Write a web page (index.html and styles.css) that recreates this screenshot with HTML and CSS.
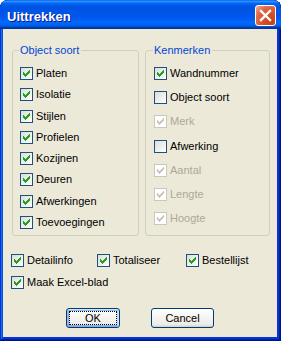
FILE: index.html
```html
<!DOCTYPE html>
<html>
<head>
<meta charset="utf-8">
<link rel="stylesheet" href="styles.css">
</head>
<body>
<div class="window">
  <div class="titlebar">
    <span class="title">Uittrekken</span>
    <span class="close"><svg width="19" height="19" viewBox="0 0 19 19"><path d="M5 5 L14 14 M14 5 L5 14" stroke="#fff" stroke-width="2.4" stroke-linecap="square"/></svg></span>
  </div>
  <div class="client">
    <div class="groups">
      <fieldset class="group group-left">
        <legend>Object soort</legend>
        <div class="list list-left">
          <label class="row"><span class="cb"><svg class="chk" width="13" height="13" viewBox="0 0 13 13"><path d="M3 5h1v3h-1zM4 6h1v3h-1zM5 7h1v3h-1zM6 6h1v3h-1zM7 5h1v3h-1zM8 4h1v3h-1zM9 3h1v3h-1z"/></svg></span>Platen</label>
          <label class="row"><span class="cb"><svg class="chk" width="13" height="13" viewBox="0 0 13 13"><path d="M3 5h1v3h-1zM4 6h1v3h-1zM5 7h1v3h-1zM6 6h1v3h-1zM7 5h1v3h-1zM8 4h1v3h-1zM9 3h1v3h-1z"/></svg></span>Isolatie</label>
          <label class="row"><span class="cb"><svg class="chk" width="13" height="13" viewBox="0 0 13 13"><path d="M3 5h1v3h-1zM4 6h1v3h-1zM5 7h1v3h-1zM6 6h1v3h-1zM7 5h1v3h-1zM8 4h1v3h-1zM9 3h1v3h-1z"/></svg></span>Stijlen</label>
          <label class="row"><span class="cb"><svg class="chk" width="13" height="13" viewBox="0 0 13 13"><path d="M3 5h1v3h-1zM4 6h1v3h-1zM5 7h1v3h-1zM6 6h1v3h-1zM7 5h1v3h-1zM8 4h1v3h-1zM9 3h1v3h-1z"/></svg></span>Profielen</label>
          <label class="row"><span class="cb"><svg class="chk" width="13" height="13" viewBox="0 0 13 13"><path d="M3 5h1v3h-1zM4 6h1v3h-1zM5 7h1v3h-1zM6 6h1v3h-1zM7 5h1v3h-1zM8 4h1v3h-1zM9 3h1v3h-1z"/></svg></span>Kozijnen</label>
          <label class="row"><span class="cb"><svg class="chk" width="13" height="13" viewBox="0 0 13 13"><path d="M3 5h1v3h-1zM4 6h1v3h-1zM5 7h1v3h-1zM6 6h1v3h-1zM7 5h1v3h-1zM8 4h1v3h-1zM9 3h1v3h-1z"/></svg></span>Deuren</label>
          <label class="row"><span class="cb"><svg class="chk" width="13" height="13" viewBox="0 0 13 13"><path d="M3 5h1v3h-1zM4 6h1v3h-1zM5 7h1v3h-1zM6 6h1v3h-1zM7 5h1v3h-1zM8 4h1v3h-1zM9 3h1v3h-1z"/></svg></span>Afwerkingen</label>
          <label class="row"><span class="cb"><svg class="chk" width="13" height="13" viewBox="0 0 13 13"><path d="M3 5h1v3h-1zM4 6h1v3h-1zM5 7h1v3h-1zM6 6h1v3h-1zM7 5h1v3h-1zM8 4h1v3h-1zM9 3h1v3h-1z"/></svg></span>Toevoegingen</label>
        </div>
      </fieldset>
      <fieldset class="group group-right">
        <legend>Kenmerken</legend>
        <div class="list list-right">
          <label class="row"><span class="cb"><svg class="chk" width="13" height="13" viewBox="0 0 13 13"><path d="M3 5h1v3h-1zM4 6h1v3h-1zM5 7h1v3h-1zM6 6h1v3h-1zM7 5h1v3h-1zM8 4h1v3h-1zM9 3h1v3h-1z"/></svg></span>Wandnummer</label>
          <label class="row"><span class="cb"></span>Object soort</label>
          <label class="row disabled"><span class="cb"><svg class="chk" width="13" height="13" viewBox="0 0 13 13"><path d="M3 5h1v3h-1zM4 6h1v3h-1zM5 7h1v3h-1zM6 6h1v3h-1zM7 5h1v3h-1zM8 4h1v3h-1zM9 3h1v3h-1z"/></svg></span>Merk</label>
          <label class="row"><span class="cb"></span>Afwerking</label>
          <label class="row disabled"><span class="cb"><svg class="chk" width="13" height="13" viewBox="0 0 13 13"><path d="M3 5h1v3h-1zM4 6h1v3h-1zM5 7h1v3h-1zM6 6h1v3h-1zM7 5h1v3h-1zM8 4h1v3h-1zM9 3h1v3h-1z"/></svg></span>Aantal</label>
          <label class="row disabled"><span class="cb"><svg class="chk" width="13" height="13" viewBox="0 0 13 13"><path d="M3 5h1v3h-1zM4 6h1v3h-1zM5 7h1v3h-1zM6 6h1v3h-1zM7 5h1v3h-1zM8 4h1v3h-1zM9 3h1v3h-1z"/></svg></span>Lengte</label>
          <label class="row disabled"><span class="cb"><svg class="chk" width="13" height="13" viewBox="0 0 13 13"><path d="M3 5h1v3h-1zM4 6h1v3h-1zM5 7h1v3h-1zM6 6h1v3h-1zM7 5h1v3h-1zM8 4h1v3h-1zM9 3h1v3h-1z"/></svg></span>Hoogte</label>
        </div>
      </fieldset>
    </div>
    <div class="options">
      <label class="row"><span class="cb"><svg class="chk" width="13" height="13" viewBox="0 0 13 13"><path d="M3 5h1v3h-1zM4 6h1v3h-1zM5 7h1v3h-1zM6 6h1v3h-1zM7 5h1v3h-1zM8 4h1v3h-1zM9 3h1v3h-1z"/></svg></span>Detailinfo</label>
      <label class="row"><span class="cb"><svg class="chk" width="13" height="13" viewBox="0 0 13 13"><path d="M3 5h1v3h-1zM4 6h1v3h-1zM5 7h1v3h-1zM6 6h1v3h-1zM7 5h1v3h-1zM8 4h1v3h-1zM9 3h1v3h-1z"/></svg></span>Totaliseer</label>
      <label class="row"><span class="cb"><svg class="chk" width="13" height="13" viewBox="0 0 13 13"><path d="M3 5h1v3h-1zM4 6h1v3h-1zM5 7h1v3h-1zM6 6h1v3h-1zM7 5h1v3h-1zM8 4h1v3h-1zM9 3h1v3h-1z"/></svg></span>Bestellijst</label>
      <label class="row wide"><span class="cb"><svg class="chk" width="13" height="13" viewBox="0 0 13 13"><path d="M3 5h1v3h-1zM4 6h1v3h-1zM5 7h1v3h-1zM6 6h1v3h-1zM7 5h1v3h-1zM8 4h1v3h-1zM9 3h1v3h-1z"/></svg></span>Maak Excel-blad</label>
    </div>
    <div class="buttons">
      <button class="btn btn-ok">OK</button>
      <button class="btn btn-cancel">Cancel</button>
    </div>
  </div>
</div>
</body>
</html>
```

FILE: styles.css
```css
html, body {
  margin: 0;
  padding: 0;
  background: #fff;
}

.window {
  width: 281px;
  height: 341px;
  box-sizing: border-box;
  display: flex;
  flex-direction: column;
  border-radius: 8px 8px 0 0;
  background: #0831d9;
  box-shadow: inset -1px -1px #00138c, inset 1px 1px #0831d9, inset -2px -2px #001ea0, inset 2px 2px #166aee, inset -3px -3px #003bda, inset 3px 3px #0855dd;
  overflow: hidden;
  font-family: "Liberation Sans", Arial, sans-serif;
  font-size: 11px;
}

.titlebar {
  height: 29px;
  flex: none;
  box-sizing: border-box;
  display: flex;
  align-items: flex-start;
  justify-content: space-between;
  padding: 5px 5px 0 7px;
  border-radius: 8px 8px 0 0;
  background: linear-gradient(180deg, #0997ff 0%, #0053ee 8%, #0050ee 40%, #0066ff 88%, #0066ff 93%, #005bff 95%, #003dd7 96%, #003dd7 100%);
  background: linear-gradient(180deg, #0058ee 0%, #3593ff 4%, #288eff 6%, #127dff 8%, #036ffc 10%, #0262ee 14%, #0057e5 20%, #0054e3 24%, #0055eb 56%, #005bf5 66%, #026afe 76%, #0062ef 86%, #0052d6 92%, #0040ab 94%, #003092 100%);
}

.title {
  margin-top: 4px;
  font-family: "Liberation Sans", Arial, sans-serif;
  font-weight: bold;
  font-size: 13px;
  line-height: 15px;
  color: #fff;
  text-shadow: 1px 1px #0f1089;
  letter-spacing: 0;
}

.close {
  width: 21px;
  height: 21px;
  box-sizing: border-box;
  border: 1px solid #fff;
  border-radius: 3px;
  background: radial-gradient(circle at 90% 90%, #cc4600 0%, #dc6527 55%, #cd7546 70%, #ffccb2 90%, #fff 100%);
  background: radial-gradient(circle at 85% 85%, #c8401c 0%, #d9522e 45%, #e06a48 70%, #f0a48a 95%, #fbd4c4 110%);
  display: flex;
}

.client {
  flex: 1;
  margin: 0 4px 4px 3px;
  background: #ece9d8;
  padding: 15px 7px 0 8px;
}

.groups {
  display: flex;
  gap: 6px;
  margin-left: 1px;
}

.group {
  margin: 0;
  border: 1px solid #d0d0bf;
  border-radius: 3px;
  min-width: 0;
  box-sizing: border-box;
}

.group-left {
  width: 127px;
  padding: 10px 0 6px 7px;
}

.group-right {
  width: 125px;
  padding: 10px 0 6px 8px;
}

.group legend {
  color: #0046d5;
  font-size: 11px;
  line-height: 13px;
  padding: 0 2px 0 1px;
  margin-left: -1px;
}

.list {
  display: flex;
  flex-direction: column;
}

.list-left {
  gap: 8.3px;
}

.list-right {
  gap: 11.2px;
}

.row {
  display: flex;
  align-items: center;
  gap: 3px;
  height: 13px;
  line-height: 13px;
  color: #000;
  white-space: nowrap;
}

.row.disabled {
  color: #aca899;
}

.cb {
  width: 13px;
  height: 13px;
  box-sizing: border-box;
  flex: none;
  border: 1px solid #1c5180;
  background: linear-gradient(135deg, #dcdcd7, #fff);
  position: relative;
}

.chk {
  display: block;
  margin: -1px;
  fill: #21a121;
  shape-rendering: crispEdges;
}

.row.disabled .cb {
  border-color: #cac8bb;
  background: #fff;
}

.row.disabled .chk {
  fill: #cac8bb;
}

.options {
  margin-top: 18px;
  display: grid;
  grid-template-columns: 86px 89px auto;
  row-gap: 9px;
}

.options .wide {
  grid-column: 1 / span 3;
}

.buttons {
  margin-top: 19px;
  display: flex;
  justify-content: center;
  gap: 31px;
  padding-right: 1px;
}

.btn {
  height: 20px;
  box-sizing: border-box;
  border: 1px solid #003c74;
  border-radius: 3px;
  background: linear-gradient(180deg, #fff, #ecebe6 86%, #d6d0c5);
  font-family: "Liberation Sans", Arial, sans-serif;
  font-size: 11px;
  color: #000;
  padding: 0;
}

.btn-ok {
  width: 54px;
  box-shadow: inset -1px 1px #cee7ff, inset 1px 2px #98b8ea, inset -2px 2px #bcd4f6, inset 1px -1px #89ade4, inset 2px -2px #89ade4;
  outline: 1px dotted #000;
  outline-offset: -4px;
}

.btn-cancel {
  width: 63px;
}
```
